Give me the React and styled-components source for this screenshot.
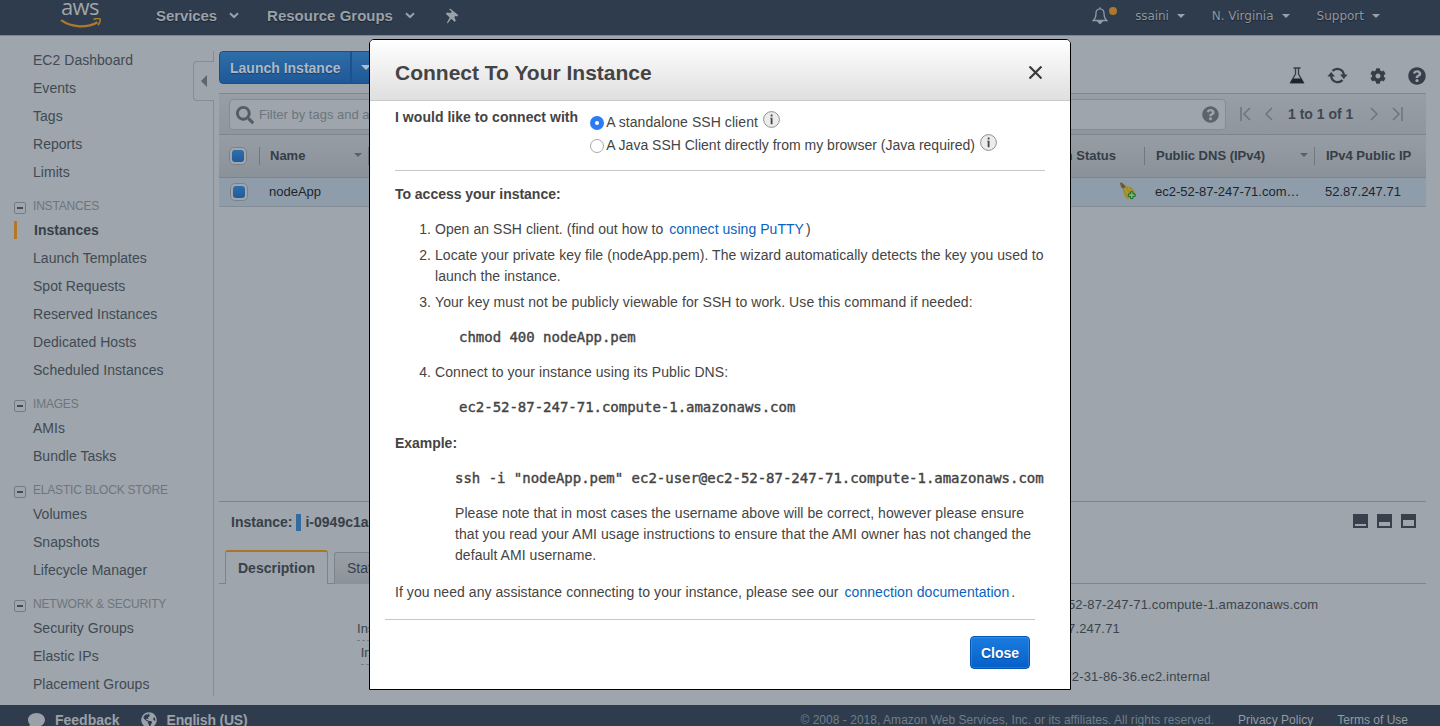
import React from "react";
import styled, { createGlobalStyle } from "styled-components";
import { FaQuestionCircle, FaCog, FaComment, FaGlobeAmericas, FaSearch } from "react-icons/fa";

const GlobalStyle = createGlobalStyle`
  * { box-sizing: border-box; }
  body {
    margin: 0;
    overflow: hidden;
    font-family: "Liberation Sans", Arial, sans-serif;
    font-size: 14px;
    color: #444c55;
    background: #9ea5ac;
  }
`;

const Page = styled.div`
  display: flex;
  flex-direction: column;
  width: 1440px;
  height: 726px;
  overflow: hidden;
  background: #9ea5ac;
`;

/* ---------- top navigation ---------- */

const TopNav = styled.header`
  display: flex;
  flex: none;
  height: 36px;
  padding: 0 60px;
  background: #2f3c4d;
  border-bottom: 1px solid #7d858e;
`;

const Brand = styled.div`
  display: flex;
  flex-direction: column;
  width: 96px;
  height: 35px;
`;

const BrandName = styled.span`
  height: 18px;
  padding-left: 1px;
  font: 500 22px/13px "Open Sans", sans-serif;
  letter-spacing: -0.6px;
  color: #9fa5ab;
`;

const Smile = styled.svg`
  display: block;
  width: 42px;
  height: 10px;
`;

const NavItem = styled.div`
  display: flex;
  align-items: center;
  height: ${(p) => (p.$small ? 32 : 31)}px;
  gap: ${(p) => (p.$small ? "8px" : "12px")};
  margin-left: ${(p) => p.$ml || 0}px;
  color: ${(p) => (p.$small ? "#8f969e" : "#9aa1a8")};
  font: ${(p) => (p.$small ? '12px "DejaVu Sans", sans-serif' : 'bold 15px "Liberation Sans", sans-serif')};
  text-shadow: 0 1px 1px #1b2430;
  white-space: nowrap;
  letter-spacing: ${(p) => p.$ls || 0}px;
`;

const NavSpacer = styled.div`
  flex: 1;
`;

const Caret = styled.span`
  width: 0;
  height: 0;
  border: ${(p) => p.$size || 4}px solid transparent;
  border-top-color: ${(p) => p.$color || "#9aa1a8"};
  border-bottom-width: 0;
`;

const BellWrap = styled.div`
  display: flex;
  width: 26px;
  margin-top: 7px;
`;

const Dot = styled.span`
  width: 8px;
  height: 8px;
  margin-left: 1px;
  border-radius: 50%;
  background: #ad782c;
`;

/* ---------- sidebar ---------- */

const Body = styled.div`
  display: flex;
  flex: none;
  height: 669px;
`;

const Sidebar = styled.nav`
  position: relative;
  width: 214px;
  padding-top: 10px;
`;

const SideEdge = styled.div`
  position: absolute;
  top: 15px;
  right: 0;
  height: 645px;
  border-right: 1px solid #858c93;
`;

const CollapseTab = styled.div`
  position: absolute;
  top: 25px;
  right: 0;
  display: flex;
  align-items: center;
  justify-content: center;
  width: 21px;
  height: 40px;
  background: #9ea5ac;
  border: 1px solid #858c93;
  border-right: 0;
  border-radius: 4px 0 0 4px;
`;

const TabArrow = styled.span`
  border: 6px solid transparent;
  border-left-width: 0;
  border-right-color: #5d666f;
`;

const SideItem = styled.div`
  display: flex;
  align-items: center;
  height: 28px;
  margin-left: ${(p) => (p.$active ? 14 : 0)}px;
  padding-left: ${(p) => (p.$active ? 17 : 33)}px;
  line-height: 28px;
  letter-spacing: 0.03px;
  font-weight: ${(p) => (p.$active ? "bold" : "normal")};
  color: ${(p) => (p.$active ? "#373f49" : "#414a53")};
  &::before {
    content: ${(p) => (p.$active ? '""' : "none")};
    width: 3px;
    height: 18px;
    margin-left: -17px;
    margin-right: 17px;
    background: #b07a28;
  }
`;

const SideHeading = styled.div`
  display: flex;
  align-items: flex-start;
  gap: 7px;
  height: 30px;
  padding: 10px 0 0 14px;
  font-size: 12px;
  line-height: 20px;
  letter-spacing: -0.2px;
  color: #6d757d;
`;

const Minus = styled.span`
  display: flex;
  align-items: center;
  justify-content: center;
  width: 12px;
  height: 12px;
  margin-top: 6px;
  border: 1px solid #747c84;
  border-radius: 2px;
  &::after {
    content: "";
    width: 6px;
    height: 2px;
    background: #434c55;
  }
`;

/* ---------- main column ---------- */

const Main = styled.main`
  display: flex;
  flex-direction: column;
  width: 1207px;
  margin-left: 5px;
`;

const Toolbar = styled.div`
  display: flex;
  justify-content: space-between;
  height: 57px;
  padding-top: 15px;
`;

const SplitButton = styled.div`
  display: flex;
  height: 33px;
  border: 1px solid #1b4f8c;
  border-radius: 4px;
  background: linear-gradient(#2d6ea8, #1f5898);
  color: #aeb9c4;
  font-weight: bold;
  line-height: 32px;
  text-shadow: 0 1px 1px #173f72;
`;

const SplitLabel = styled.span`
  width: 132px;
  padding-left: 10px;
  border-right: 2px solid #1c5190;
`;

const SplitCaret = styled.span`
  display: flex;
  align-items: center;
  width: 30px;
  padding-left: 9px;
`;

const ToolIcons = styled.div`
  display: flex;
  align-items: center;
  gap: 22px;
  height: 49px;
  color: #363f49;
`;

const FilterBar = styled.div`
  display: flex;
  align-items: center;
  height: 42px;
  padding-left: 10px;
  border-top: 1px solid #80878e;
  border-bottom: 1px solid #7d848b;
  background: linear-gradient(#979ea5, #8f969d);
`;

const SearchBox = styled.div`
  display: flex;
  align-items: center;
  width: 997px;
  height: 31px;
  padding: 0 6px;
  gap: 5px;
  border: 1px solid #848b92;
  border-radius: 4px;
  background: #9ea5ac;
  color: #6d757d;
  font-size: 13px;
  svg { flex: none; }
  span { flex: 1; }
`;

const Pager = styled.div`
  display: flex;
  align-items: center;
  margin-left: 14px;
  color: #3f4750;
  font-weight: bold;
  b { margin: 0 17px 0 15px; }
  svg + svg { margin-left: 14px; }
`;

const TableRow = styled.div`
  display: flex;
  align-items: center;
  height: ${(p) => (p.$head ? 43 : 29)}px;
  border-bottom: 1px solid ${(p) => (p.$head ? "#7d858e" : "#848d96")};
  background: ${(p) => (p.$head ? "linear-gradient(#969da4, #8a9198)" : "#8f9dab")};
  color: ${(p) => (p.$head ? "#353d47" : "#1c252e")};
  font-size: 13px;
  font-weight: ${(p) => (p.$head ? "bold" : "normal")};
`;

const Cell = styled.div`
  display: flex;
  align-items: center;
  justify-content: ${(p) => (p.$end ? "flex-end" : "space-between")};
  width: ${(p) => p.$w}px;
  height: 18px;
  padding-left: ${(p) => p.$pl || 0}px;
  padding-right: ${(p) => p.$pr || 0}px;
  padding-bottom: ${(p) => (p.$check ? 0 : 2)}px;
  border-left: 1px solid ${(p) => (p.$line ? "#70777e" : "transparent")};
  white-space: nowrap;
`;

const Check = styled.span`
  flex: none;
  width: 18px;
  height: 18px;
  padding: 2px;
  border: 1px solid #7c8289;
  border-radius: 5px;
  background: #a0a6ab;
  &::after {
    content: "";
    display: block;
    width: 12px;
    height: 12px;
    border-radius: 3px;
    background: linear-gradient(#2e6fab, #205a9b);
  }
`;

const ListSpace = styled.div`
  height: 294px;
`;

const DetailHead = styled.div`
  display: flex;
  align-items: center;
  height: 49px;
  padding: 0 10px 8px 12px;
  border-top: 1px solid #7c848c;
  color: #373f49;
  font-weight: bold;
`;

const Marker = styled.span`
  width: 5px;
  height: 17px;
  margin: 0 4px;
  background: #336a9f;
`;

const PaneIcons = styled.div`
  display: flex;
  gap: 9px;
  margin: -2px 0 0 auto;
`;

const PaneIcon = styled.span`
  width: 15px;
  height: 14px;
  border: 2px solid #38414b;
  border-top-width: ${(p) => p.$top}px;
`;

const Tabs = styled.div`
  display: flex;
  align-items: stretch;
  height: 34px;
`;

const TabGap = styled.div`
  width: ${(p) => p.$w || 6}px;
  flex: ${(p) => (p.$fill ? 1 : "none")};
  border-bottom: 1px solid #7c848c;
`;

const Tab = styled.div`
  width: ${(p) => p.$w}px;
  padding-left: 12px;
  line-height: 33px;
  border: 1px solid #7c848c;
  border-bottom: 0;
  border-radius: 3px 3px 0 0;
  color: #38414a;
  ${(p) =>
    p.$active
      ? "border-top: 2px solid #aa7529; font-weight: bold;"
      : "margin-top: 2px; line-height: 30px; background: linear-gradient(#999fa6, #8b9299);"}
`;

const Details = styled.div`
  display: grid;
  grid-template-columns: 219px 240px 338px 1fr;
  grid-auto-rows: 24px;
  height: 112px;
  padding-top: 9px;
  overflow: hidden;
  font-size: 13px;
  line-height: 24px;
  color: #3b444d;
`;

const DetailLabel = styled.div`
  justify-self: end;
  height: 24px;
  line-height: 24px;
  white-space: nowrap;
  background: repeating-linear-gradient(90deg, #767e86 0 3px, transparent 3px 5px) 0 23px / 100% 1px no-repeat;
`;

const DetailValue = styled.div`
  padding-left: ${(p) => p.$pl || 0}px;
  letter-spacing: 0.17px;
  white-space: nowrap;
`;

/* ---------- footer ---------- */

const Footer = styled.footer`
  display: flex;
  flex: none;
  align-items: flex-start;
  height: 21px;
  padding: 0 32px 0 28px;
  background: #2f3c4d;
  color: #9aa1a8;
  font-weight: bold;
  line-height: 31px;
  overflow: hidden;
  white-space: nowrap;
  svg { margin: 7px 10px 0 0; flex: none; }
`;

const FooterText = styled.span`
  margin-right: ${(p) => p.$mr || 0}px;
  letter-spacing: ${(p) => p.$ls || 0}px;
`;

const Legal = styled.span`
  font-size: 12px;
  font-weight: normal;
  letter-spacing: ${(p) => p.$ls || 0}px;
  color: ${(p) => (p.$dim ? "#6e7f8a" : "#949ba3")};
  margin-left: ${(p) => p.$ml || 0};
`;

/* ---------- modal ---------- */

const Dialog = styled.section`
  position: fixed;
  top: 39px;
  left: 369px;
  width: 702px;
  height: 651px;
  border: 1px solid #000;
  border-radius: 5px 5px 0 0;
  background: #fff;
  color: #444;
  overflow: hidden;
`;

const DialogHeader = styled.div`
  display: flex;
  align-items: center;
  justify-content: space-between;
  height: 61px;
  padding: 5px 28px 0 25px;
  border-bottom: 1px solid #c8c8c8;
  background: linear-gradient(#fff, #dfdfdf);
`;

const DialogTitle = styled.h1`
  margin: 0;
  font-size: 21px;
  line-height: 25px;
`;

const DialogBody = styled.div`
  padding: 6px 25px 0;
  line-height: 21px;
`;

const Choice = styled.div`
  display: flex;
  height: 63px;
  gap: 12px;
  b { letter-spacing: 0.04px; }
`;

const Options = styled.div`
  display: flex;
  flex-direction: column;
  padding-top: 3px;
`;

const Option = styled.label`
  display: flex;
  height: 23px;
  line-height: 25px;
  letter-spacing: ${(p) => p.$ls || 0}px;
`;

const Radio = styled.span`
  width: 14px;
  height: 14px;
  margin: 6px 2px 0 0;
  border-radius: 50%;
  border: ${(p) => (p.$on ? "5px solid #2c7bf6" : "1px solid #a9a9a9")};
  background: #fff;
`;

const Info = styled.svg`
  width: 17px;
  height: 17px;
  margin: 1px 0 0 5px;
`;

const Rule = styled.div`
  height: 1px;
  background: #c6c6c6;
  margin: ${(p) => (p.$foot ? "16px 10px 0 -10px" : "0")};
`;

const Strong = styled.div`
  font-weight: bold;
  letter-spacing: -0.03px;
  margin-top: ${(p) => p.$mt}px;
`;

const Steps = styled.ol`
  margin: 14px 0 0;
  padding: 0;
  list-style: none;
`;

const Step = styled.li`
  display: flex;
  gap: 4px;
  margin-top: ${(p) => p.$mt}px;
`;

const StepNumber = styled.span`
  flex: none;
  width: 36px;
  text-align: right;
`;

const StepText = styled.span`
  width: 620px;
  margin-right: -10px;
  letter-spacing: ${(p) => p.$ls || 0.08}px;
`;

const Code = styled.code`
  display: block;
  margin: 14px 0 0 ${(p) => p.$ml}px;
  height: 21px;
  font: 14px/21px "DejaVu Sans Mono", monospace;
  -webkit-text-stroke: 0.4px #444;
  white-space: nowrap;
  letter-spacing: -0.02px;
`;

const Note = styled.p`
  width: 588px;
  margin: 14px 0 0 60px;
  letter-spacing: 0.055px;
`;

const Assist = styled.p`
  margin: 16px 0 0;
  white-space: nowrap;
  letter-spacing: 0.055px;
`;

const Link = styled.a`
  margin: 0 2px;
  color: #0a62c0;
`;

const DialogFooter = styled.div`
  display: flex;
  justify-content: flex-end;
  padding: 16px 15px 0 0;
`;

const CloseButton = styled.button`
  width: 60px;
  height: 33px;
  padding: 0;
  border: 1px solid #0556b4;
  border-radius: 4px;
  background: linear-gradient(#1b7ce0, #0560c8);
  box-shadow: inset 0 0 0 1px rgba(255, 255, 255, 0.12);
  color: #fff;
  font: bold 14px "Liberation Sans", sans-serif;
  text-shadow: 0 1px 1px #044a9c;
`;

/* ---------- drawings ---------- */

const Chevron = () => (
  <svg width="10" height="7" viewBox="0 0 10 7" fill="none" stroke="currentColor" strokeWidth="2">
    <path d="M1 1.2 5 5l4-3.8" />
  </svg>
);

const Pin = () => (
  <svg width="13" height="16" viewBox="0 0 13 16" fill="currentColor">
    <path d="M4 .5 12.200 7l-1 1.500-1.900-.6-.9 1.400 1.400 3.300-.9 1.500-3.700-3.300L1.600 15.500l-.6-.9 2.700-5L0 6l.7-1.400 4 .4 1.100-1.200L3.300 1.600z" />
  </svg>
);

const Bell = () => (
  <svg width="16" height="17" viewBox="0 0 16 17" fill="none" stroke="#9299a1" strokeWidth="1.3">
    <path d="M8 1.8c-2.7 0-4 2-4 4.4 0 4-1 5.800-2.800 7.300h13.600C13 12 12 10.200 12 6.200c0-2.400-1.300-4.400-4-4.400zM8 .3v1.500" />
    <path d="M6 14.500h4L8 16.600z" fill="#9299a1" />
  </svg>
);

const Flask = () => (
  <svg width="16" height="17" viewBox="0 0 16 17" fill="none">
    <path d="M4.500 1h7M6.500 1v6L1.600 15.500h12.800L9.500 7V1" stroke="#363f49" strokeWidth="1.300" />
    <path d="M3.800 11.500h8.400l2.600 4.800H1.200z" fill="#1e252d" />
  </svg>
);

const Refresh = () => (
  <svg width="21" height="17" viewBox="0 0 21 17" fill="none" stroke="#363f49" strokeWidth="2.300">
    <path d="M5.500 4A6.500 6.500 0 0 1 16.800 8" />
    <path d="M15.500 13A6.500 6.500 0 0 1 4.200 9" />
    <path d="M13 7.500h7.600L16.800 12zM.4 9.500H8L4.200 5z" fill="#363f49" stroke="none" />
  </svg>
);

const PageArrow = ({ end, flip }) => (
  <svg
    width={end ? 11 : 8}
    height="14"
    viewBox={end ? "0 0 11 14" : "0 0 8 14"}
    fill="none"
    stroke="#6c747c"
    strokeWidth="1.500"
    transform={flip ? "scale(-1 1)" : undefined}
  >
    {end ? <path d="M1 0v14M10 1 4 7l6 6" /> : <path d="M7 1 1 7l6 6" />}
  </svg>
);

const AlarmBell = () => (
  <svg width="18" height="18" viewBox="0 0 18 18">
    <path d="M1 .8 2.800.4 7 4.500 4.800 7.500 2 5z" fill="#73572d" />
    <path d="M3.800 8C4.500 5 8 3.200 11 4.700c3.500 1.800 4 4.500 5.500 7L9 17.300C6 16 5 12.500 3.800 8z" fill="#9f8e29" />
    <path d="M6 7c1.500 2 2.200 4.500 3.500 7.500M9 6c1.500 1 2 2 2.500 3" stroke="#b7a53f" fill="none" />
    <path d="M11.500 9.800h2.400v2.200h2.300v2.400h-2.300v2.200h-2.400v-2.200H9.300V12h2.200z" fill="#7fb488" stroke="#176c2b" />
  </svg>
);

const InfoIcon = () => (
  <Info viewBox="0 0 17 17">
    <circle cx="8.500" cy="8.500" r="7.900" fill="#ececec" stroke="#8f8f8f" />
    <path d="M7.700 3.500h1.800v1.900H7.700zM7.200 6.700h2.300v6.500H7.700V7.500h-.5z" fill="#444" />
  </Info>
);

const sections = [
  ["INSTANCES", ["Instances", "Launch Templates", "Spot Requests", "Reserved Instances", "Dedicated Hosts", "Scheduled Instances"]],
  ["IMAGES", ["AMIs", "Bundle Tasks"]],
  ["ELASTIC BLOCK STORE", ["Volumes", "Snapshots", "Lifecycle Manager"]],
  ["NETWORK & SECURITY", ["Security Groups", "Elastic IPs", "Placement Groups"]],
];

const details = [
  ["Instance ID", "", "Public DNS (IPv4)", "ec2-52-87-247-71.compute-1.amazonaws.com"],
  ["Instance state", "", "IPv4 Public IP", "52.87.247.71"],
  ["Instance type", "", "IPv6 IPs", ""],
  ["", "", "Private DNS", "ip-172-31-86-36.ec2.internal"],
  ["", "us-east-1b", "Private IPs", "172.31.86.36"],
];

export default function App() {
  return (
    <>
      <GlobalStyle />
      <Page>
        <TopNav>
          <Brand>
            <BrandName>aws</BrandName>
            <Smile viewBox="0 0 42 10" fill="none" stroke="#b07a2b">
              <path d="M1 2.200C12 9.800 27 10.200 37.500 4.200" strokeWidth="2.200" />
              <path d="M33.500 1.500c3-1.200 6-1.200 6.500-.3.500 1-.3 3.800-2 6" strokeWidth="1.600" />
            </Smile>
          </Brand>
          <NavItem $ls={-0.08}>Services<Chevron /></NavItem>
          <NavItem $ml={28}>Resource Groups<Chevron /></NavItem>
          <NavItem $ml={31}><Pin /></NavItem>
          <NavSpacer />
          <BellWrap><Bell /><Dot /></BellWrap>
          <NavItem $small $ml={17} $ls={-0.1}>ssaini<Caret /></NavItem>
          <NavItem $small $ml={27}>N. Virginia<Caret /></NavItem>
          <NavItem $small $ml={27}>Support<Caret /></NavItem>
        </TopNav>

        <Body>
          <Sidebar>
            {["EC2 Dashboard", "Events", "Tags", "Reports", "Limits"].map((t) => (
              <SideItem key={t}>{t}</SideItem>
            ))}
            {sections.map(([title, items]) => (
              <React.Fragment key={title}>
                <SideHeading><Minus />{title}</SideHeading>
                {items.map((t) => (
                  <SideItem key={t} $active={t === "Instances"}>{t}</SideItem>
                ))}
              </React.Fragment>
            ))}
            <SideEdge />
            <CollapseTab><TabArrow /></CollapseTab>
          </Sidebar>

          <Main>
            <Toolbar>
              <SplitButton>
                <SplitLabel>Launch Instance</SplitLabel>
                <SplitCaret><Caret $size={5} $color="#b5bec7" /></SplitCaret>
              </SplitButton>
              <ToolIcons>
                <Flask />
                <Refresh />
                <FaCog size={16} />
                <FaQuestionCircle size={18} />
              </ToolIcons>
            </Toolbar>
            <FilterBar>
              <SearchBox>
                <FaSearch size={18} color="#545d66" transform="translate(0 1)" />
                <span>Filter by tags and attributes or search by keyword</span>
                <FaQuestionCircle size={17} color="#5b636c" />
              </SearchBox>
              <Pager>
                <PageArrow end />
                <PageArrow />
                <b>1 to 1 of 1</b>
                <PageArrow flip />
                <PageArrow end flip />
              </Pager>
            </FilterBar>
            <TableRow $head>
              <Cell $w={40} $pl={9} $check><Check /></Cell>
              <Cell $w={109} $pl={10} $pr={6} $line>Name<Caret $color="#59616a" /></Cell>
              <Cell $w={776} $end $pr={28} $line>Alarm Status</Cell>
              <Cell $w={170} $pl={11} $pr={6} $line>Public DNS (IPv4)<Caret $color="#59616a" /></Cell>
              <Cell $w={112} $pl={11} $line>IPv4 Public IP</Cell>
            </TableRow>
            <TableRow>
              <Cell $w={40} $pl={10} $check><Check /></Cell>
              <Cell $w={109} $pl={9}>nodeApp</Cell>
              <Cell $w={776} $end $pr={7}><AlarmBell /></Cell>
              <Cell $w={170} $pl={10}>ec2-52-87-247-71.com…</Cell>
              <Cell $w={112} $pl={10}>52.87.247.71</Cell>
            </TableRow>
            <ListSpace />
            <DetailHead>
              Instance:<Marker />i-0949c1a
              <PaneIcons>
                <PaneIcon $top={10} />
                <PaneIcon $top={8} />
                <PaneIcon $top={6} />
              </PaneIcons>
            </DetailHead>
            <Tabs>
              <TabGap />
              <Tab $w={103} $active>Description</Tab>
              <TabGap />
              <Tab $w={110}>Status Checks</Tab>
              <TabGap $fill />
            </Tabs>
            <Details>
              {details.map(([a, b, c, d], i) => (
                <React.Fragment key={i}>
                  {a ? <DetailLabel>{a}</DetailLabel> : <span />}
                  <DetailValue $pl={25}>{b}</DetailValue>
                  <DetailLabel>{c}</DetailLabel>
                  <DetailValue $pl={26}>{d}</DetailValue>
                </React.Fragment>
              ))}
            </Details>
          </Main>
        </Body>

        <Footer>
          <FaComment size={17} />
          <FooterText $mr={21}>Feedback</FooterText>
          <FaGlobeAmericas size={16} />
          <FooterText $ls={-0.2}>English (US)</FooterText>
          <Legal $dim $ml="auto" $ls={0.03}>© 2008 - 2018, Amazon Web Services, Inc. or its affiliates. All rights reserved.</Legal>
          <Legal $ml="24px" $ls={0.04}>Privacy Policy</Legal>
          <Legal $ml="24px">Terms of Use</Legal>
        </Footer>
      </Page>

      <Dialog role="dialog">
        <DialogHeader>
          <DialogTitle>Connect To Your Instance</DialogTitle>
          <svg width="13" height="13" viewBox="0 0 13 13" stroke="#3a3a3a" strokeWidth="2.200">
            <path d="m.5.5 12 12m0-12-12 12" />
          </svg>
        </DialogHeader>
        <DialogBody>
          <Choice>
            <b>I would like to connect with</b>
            <Options>
              <Option $ls={0.07}><Radio $on />A standalone SSH client<InfoIcon /></Option>
              <Option><Radio />A Java SSH Client directly from my browser (Java required)<InfoIcon /></Option>
            </Options>
          </Choice>
          <Rule />
          <Strong $mt={13}>To access your instance:</Strong>
          <Steps>
            <Step $mt={0}>
              <StepNumber>1.</StepNumber>
              <StepText $ls={0.05}>Open an SSH client. (find out how to <Link>connect using PuTTY</Link>)</StepText>
            </Step>
            <Step $mt={5}>
              <StepNumber>2.</StepNumber>
              <StepText $ls={0.06}>Locate your private key file (nodeApp.pem). The wizard automatically detects the key you used to launch the instance.</StepText>
            </Step>
            <Step $mt={5}>
              <StepNumber>3.</StepNumber>
              <StepText>Your key must not be publicly viewable for SSH to work. Use this command if needed:</StepText>
            </Step>
            <Code $ml={64}>chmod 400 nodeApp.pem</Code>
            <Step $mt={14}>
              <StepNumber>4.</StepNumber>
              <StepText>Connect to your instance using its Public DNS:</StepText>
            </Step>
            <Code $ml={64}>ec2-52-87-247-71.compute-1.amazonaws.com</Code>
          </Steps>
          <Strong $mt={15}>Example:</Strong>
          <Code $ml={60}>ssh -i "nodeApp.pem" ec2-user@ec2-52-87-247-71.compute-1.amazonaws.com</Code>
          <Note>
            Please note that in most cases the username above will be correct, however please ensure that you read your AMI usage instructions to ensure that the AMI owner has not changed the default AMI username.
          </Note>
          <Assist>
            If you need any assistance connecting to your instance, please see our <Link>connection documentation</Link>.
          </Assist>
          <Rule $foot />
          <DialogFooter>
            <CloseButton>Close</CloseButton>
          </DialogFooter>
        </DialogBody>
      </Dialog>
    </>
  );
}
